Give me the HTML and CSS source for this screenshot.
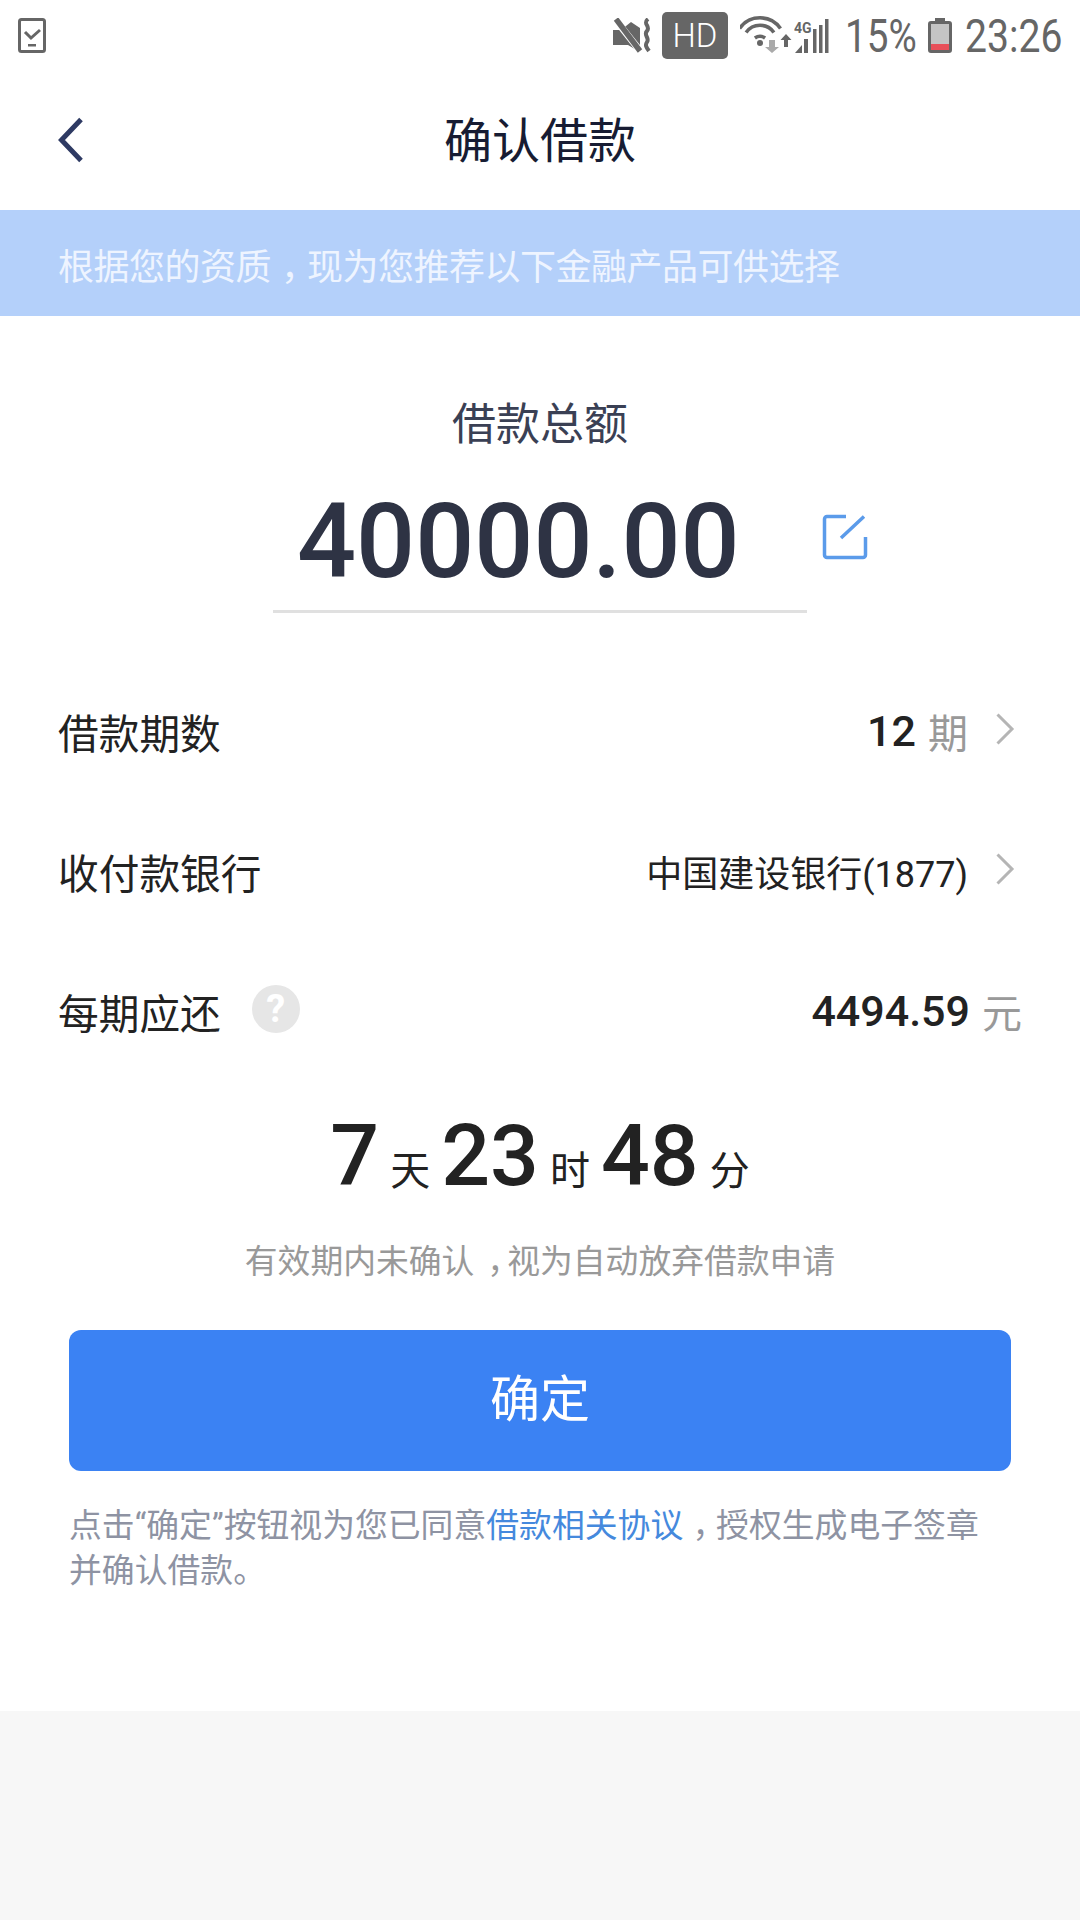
FILE: index.html
```html
<!DOCTYPE html>
<html lang="zh-CN">
<head>
<meta charset="utf-8">
<title>确认借款</title>
<link rel="stylesheet" href="styles.css">
</head>
<body>
<div class="page">
  <div class="status">
    <svg class="st-task" viewBox="0 0 28 35"><rect x="1.500" y="1.500" width="25" height="32" rx="2" fill="none" stroke="#666" stroke-width="3"/><path d="M7 14l6 6 9-8" fill="none" stroke="#666" stroke-width="3"/><rect x="10" y="26" width="8" height="2.500" fill="#666"/></svg>
    <div class="st-right">
      <svg class="st-mute" viewBox="0 0 39 35"><path d="M0 12h8l10-8 9 6v24L15 27H0z" fill="#666"/><path d="M1 0l27 34" stroke="#fff" stroke-width="7"/><path d="M3 1l24 32" stroke="#666" stroke-width="5.500"/><path d="M35 1c-6 5 3 7-1 12-4 4 3 7 0 11-2 3-1 5 2 9" fill="none" stroke="#666" stroke-width="4"/></svg>
      <span class="st-hd">HD</span>
      <svg class="st-wifi" viewBox="0 0 54 40"><g fill="none" stroke="#666" stroke-width="3.600"><path d="M14.900 24a9 9 0 0 1 10.200 0"/><path d="M6.100 18.500a17 17 0 0 1 27.800 0"/><path d="M-.5 14.500a25 25 0 0 1 41 0"/></g><circle cx="20" cy="29" r="3" fill="#666"/><path d="M29 26h6v7h4l-7 6-7-6h4z" fill="#aaa"/><path d="M44 33V26h-3.500l5.500-6 5.500 6H48v7h-4z" fill="#666"/></svg>
      <svg class="st-signal" viewBox="0 0 36 35"><text x="0" y="15" class="st-4g">4G</text><path d="M1 35l7-8v8z M10 35V21h4v14z M19 35V11h3.500v24z M25 35V7h3.500v28z M31 35V1h3.500v34z" fill="#666"/></svg>
      <span class="st-text st-pct">15%</span>
      <svg class="st-batt" viewBox="0 0 24 35"><path d="M7 0h10v3h4a3 3 0 0 1 3 3v26a3 3 0 0 1-3 3H3a3 3 0 0 1-3-3V6a3 3 0 0 1 3-3h4z" fill="#666"/><rect x="3" y="6" width="18" height="20" fill="#c4c4c4"/><rect x="3" y="26" width="18" height="6" fill="#e8505a"/></svg>
      <span class="st-text st-time">23:26</span>
    </div>
  </div>

  <div class="nav">
    <svg class="back" viewBox="0 0 26 46"><path d="M23 2.500L3.500 23 23 43.500" fill="none" stroke="#2e3a63" stroke-width="5"/></svg>
    <div class="title">确认借款</div>
  </div>

  <div class="banner">根据您的资质<span class="comma">，</span>现为您推荐以下金融产品可供选择</div>

  <div class="sum-label">借款总额</div>
  <div class="amount-row">
    <div class="amount">40000.00</div>
    <svg class="edit" viewBox="0 0 46 46"><path d="M24 2.500H5a2.500 2.500 0 0 0-2.500 2.500v36a2.500 2.500 0 0 0 2.500 2.500h36a2.500 2.500 0 0 0 2.500-2.500V23M19 24L42 2.500" fill="none" stroke="#5b9bea" stroke-width="3.500"/></svg>
  </div>

  <div class="rows">
    <div class="row">
      <span class="row-label">借款期数</span>
      <div class="row-value"><b class="num">12</b><span class="unit">期</span>
        <svg class="chev" viewBox="0 0 20 32"><path d="M2.500 1.500L17 16 2.500 30.500" fill="none" stroke="#b5b5b5" stroke-width="3"/></svg></div>
    </div>
    <div class="row">
      <span class="row-label">收付款银行</span>
      <div class="row-value"><span class="bank">中国建设银行(1877)</span>
        <svg class="chev" viewBox="0 0 20 32"><path d="M2.500 1.500L17 16 2.500 30.500" fill="none" stroke="#b5b5b5" stroke-width="3"/></svg></div>
    </div>
    <div class="row">
      <div class="row-left"><span class="row-label">每期应还</span><span class="help">?</span></div>
      <div class="row-value"><b class="num">4494.59</b><span class="unit">元</span></div>
    </div>
  </div>

  <div class="countdown">
    <b>7</b><span>天</span><b>23</b><span>时</span><b>48</b><span>分</span>
  </div>
  <div class="note">有效期内未确认<span class="comma">，</span>视为自动放弃借款申请</div>
  <button class="confirm">确定</button>
  <p class="terms">点击“确定”按钮视为您已同意<a class="link">借款相关协议</a><span class="comma">，</span>授权生成电子签章并确认借款。</p>
  <div class="footer"></div>
</div>
</body>
</html>
```

FILE: styles.css
```css
* { box-sizing: border-box; }
html, body { margin: 0; padding: 0; }
body {
  width: 1080px;
  height: 1920px;
  overflow: hidden;
  background: #fff;
  font-family: Roboto, "Noto Sans CJK SC", sans-serif;
  color: #222;
}
.page { display: flex; flex-direction: column; height: 1920px; }
.comma { display: inline-block; width: 1em; padding-left: .28em; font-feature-settings: "halt"; }

.status { height: 70px; flex: none; display: flex; align-items: flex-start; padding: 18px 18px 0 18px; }
.st-task { width: 28px; height: 35px; }
.st-right { margin-left: auto; display: flex; align-items: flex-start; }
.st-mute { width: 39px; height: 35px; margin-right: 10px; }
.st-hd {
  width: 66px; height: 47px; margin-top: -6px; margin-right: 12px;
  background: #666; color: #fff; border-radius: 5px;
  font-size: 33px; line-height: 47px; text-align: center; font-weight: 300;
}
.st-wifi { width: 54px; height: 40px; margin-top: -4px; }
.st-signal { width: 36px; height: 35px; }
.st-4g { font: 700 14px Roboto, sans-serif; fill: #666; }
.st-text { color: #666; font-size: 46px; line-height: 36px; font-weight: 400; display: block; transform-origin: left top; }
.st-pct { width: 70px; margin-left: 15px; margin-right: 13px; transform: scaleX(.84); }
.st-batt { width: 24px; height: 35px; margin-right: 13px; }
.st-time { width: 97px; transform: scaleX(.85); }

.nav { height: 140px; flex: none; display: grid; grid-template-columns: 1fr auto 1fr; align-items: center; }
.back { width: 26px; height: 46px; margin-left: 58px; }
.title { font-size: 48px; color: #171c33; line-height: 60px; padding-top: 4px; box-sizing: content-box; }

.banner {
  height: 106px; flex: none; background: #b4d0fa; color: #eef4ff;
  font-size: 36px; line-height: 96px; padding: 10px 0 0 58px; letter-spacing: -.5px;
}

.sum-label { margin-top: 79px; height: 60px; line-height: 60px; text-align: center; font-size: 44px; color: #3a4054; }
.amount-row { display: flex; align-items: flex-start; gap: 15px; padding-left: 273px; margin-top: 38px; }
.amount {
  width: 534px; height: 120px;
  padding-left: 24px;
  border-bottom: 3px solid #e0e0e0;
  font-size: 104px; font-weight: 500; line-height: 98px; color: #2e3344;
}
.edit { width: 46px; height: 46px; margin-top: 21px; }

.rows { margin-top: 48px; }
.row { height: 140px; display: flex; align-items: center; justify-content: space-between; padding: 0 58px; }
.row-left { display: flex; align-items: center; }
.row-label { font-size: 40.700px; color: #222; }
.help {
  width: 48px; height: 48px; margin-left: 31px; margin-top: -4px; border-radius: 50%;
  background: #e6e6e6; color: #fff; font-size: 38px; font-weight: 700; line-height: 48px; text-align: center;
}
.row-value { display: flex; align-items: center; }
.num { font-size: 43px; font-weight: 500; color: #222; }
.unit { font-size: 40px; color: #999; margin-left: 12px; }
.bank { font-size: 36px; color: #222; }
.chev { width: 20px; height: 32px; margin-left: 27px; margin-right: 7px; margin-top: -4px; }

.countdown { display: flex; justify-content: center; align-items: baseline; gap: 11px; margin-top: 25px; height: 100px; }
.countdown b { font-size: 86px; font-weight: 500; color: #222; line-height: 100px; }
.countdown span { font-size: 40px; color: #222; line-height: 50px; }

.note { margin-top: 34px; text-align: center; font-size: 32.800px; line-height: 44px; color: #999; }
.confirm {
  display: block; width: 942px; height: 141px; margin: 46px 0 0 69px; padding: 0 0 12px; border: 0; border-radius: 12px;
  background: #3b82f3; color: #fff; font-family: inherit; font-size: 50px;
}
.terms { margin: 33px 0 0 69px; width: 930px; font-size: 32.850px; line-height: 45px; color: #8e93a3; }
.link { color: #4589dd; }
.footer { margin-top: auto; height: 209px; flex: none; background: #f7f7f7; }
```
